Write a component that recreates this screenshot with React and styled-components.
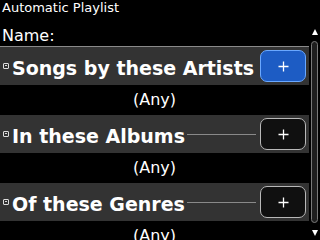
import React from "react";
import styled, { createGlobalStyle } from "styled-components";

const GlobalStyle = createGlobalStyle`
  html, body {
    margin:0;
    padding:0;
    background:#000;
  }
  body {
    font-family:"DejaVu Sans", "Liberation Sans", sans-serif;
    color:#fff;
  }
`

const sections = [
  { title: 'Songs by these Artists', value: '(Any)', focused: true },
  { title: 'In these Albums', value: '(Any)' },
  { title: 'Of these Genres', value: '(Any)' },
]

const PlusIcon = () => (
  <svg width="11" height="11" viewBox="0 0 11 11">
    <path d="M5.5 0.5 V10.5 M0.5 5.5 H10.5" stroke="#fff" strokeWidth="1.3" fill="none" />
  </svg>
)

const App = () => {
  return (
    <>
      <GlobalStyle />
      <Screen>
        <Main>
          <Title>Automatic Playlist</Title>
          <NameField>Name:</NameField>
          {sections.map((s) => (
            <Section key={s.title}>
              <Header>
                <Collapse />
                <Label>{s.title}</Label>
                <Rule />
                <AddButton $focused={s.focused}><PlusIcon /></AddButton>
              </Header>
              <Value>{s.value}</Value>
            </Section>
          ))}
        </Main>
        <ScrollBar>
          <ArrowUp />
          <Track />
          <ArrowDown />
        </ScrollBar>
      </Screen>
    </>
  )
}

export default App;

const Screen = styled.div`
  width:320px;
  height:240px;
  overflow:hidden;
  display:flex;
`

const Main = styled.div`
  width:309px;
  display:flex;
  flex-direction:column;
  flex-shrink:0;
`

const Title = styled.div`
  font-size:13px;
  line-height:16px;
  height:16px;
  padding-left:2px;
`

const NameField = styled.div`
  font-size:16px;
  line-height:20px;
  height:20px;
  padding:10px 0 0 2px;
  border-bottom:1px solid #8a8a8a;
`

const Section = styled.div`
  display:flex;
  flex-direction:column;
`

const Header = styled.div`
  height:38px;
  background:#333;
  display:flex;
  align-items:center;
  padding-right:3px;
`

const Collapse = styled.span`
  box-sizing:border-box;
  width:6px;
  height:6px;
  margin:0 3px 0 3px;
  border:1px solid #ddd;
  border-radius:1px;
  position:relative;
  flex-shrink:0;
  &::after {
    content:'';
    position:absolute;
    left:1px;
    right:1px;
    top:1px;
    height:1px;
    background:#ddd;
  }
`

const Label = styled.span`
  font-size:19px;
  font-weight:700;
  line-height:22px;
  padding-top:3px;
  white-space:nowrap;
`

const Rule = styled.span`
  flex:1;
  height:1px;
  background:#8a8a8a;
  margin:0 4px 0 2px;
`

const AddButton = styled.div`
  box-sizing:border-box;
  width:46px;
  height:32px;
  border-radius:7px;
  border:${p => p.$focused ? '1.5px solid #6aa8ff' : '1.5px solid #b8b8b8'};
  background:${p => p.$focused ? '#1d5cc4' : '#101010'};
  display:flex;
  align-items:center;
  justify-content:center;
  flex-shrink:0;
`

const Value = styled.div`
  height:30px;
  font-size:16px;
  line-height:30px;
  text-align:center;
`

const ScrollBar = styled.div`
  width:11px;
  display:flex;
  flex-direction:column;
  align-items:center;
  padding-top:29px;
  box-sizing:border-box;
`

const ArrowUp = styled.div`
  width:0;
  height:0;
  border-left:3.5px solid transparent;
  border-right:3.5px solid transparent;
  border-bottom:6px solid #fff;
`

const Track = styled.div`
  box-sizing:border-box;
  width:7px;
  height:182px;
  margin:6px 0 7px 0;
  border:1px solid #7a7a7a;
  border-radius:4px;
  background:#1e1e1e;
`

const ArrowDown = styled.div`
  width:0;
  height:0;
  border-left:3.5px solid transparent;
  border-right:3.5px solid transparent;
  border-top:6px solid #fff;
`
